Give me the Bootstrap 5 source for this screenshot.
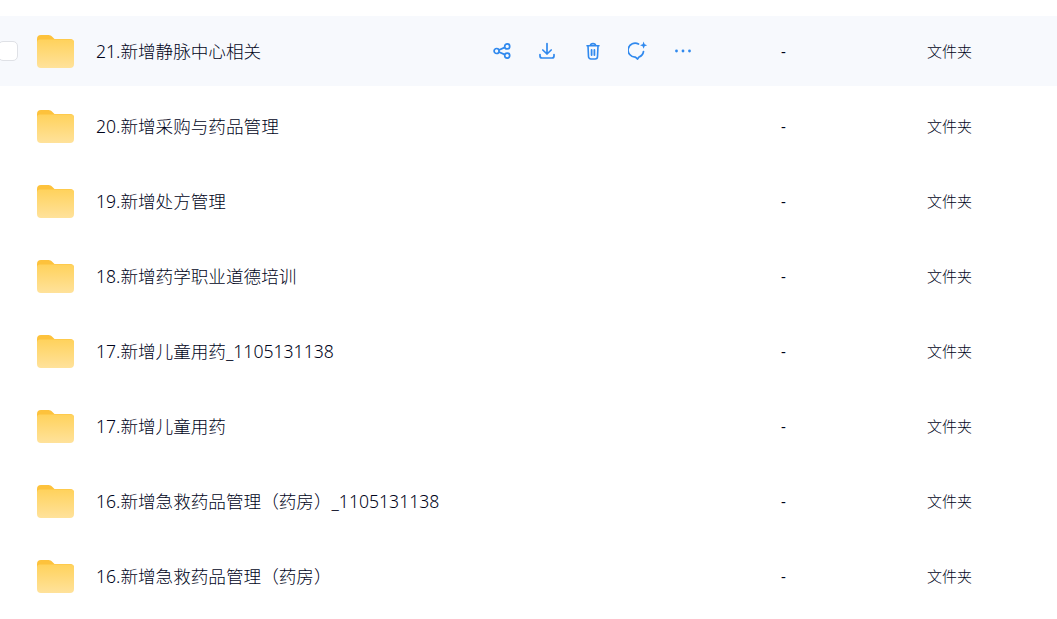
<!DOCTYPE html>
<html lang="zh">
<head>
  <meta charset="UTF-8">
  <meta name="viewport" content="width=device-width, initial-scale=1.0">
  <title>文件列表</title>
  <link href="https://cdn.jsdelivr.net/npm/bootstrap@5.3.0/dist/css/bootstrap.min.css" rel="stylesheet">
  <style>
    body {
      background-color: #fff;
      color: #00041a;
      font-family: "Noto Sans", "Noto Sans CJK SC", sans-serif;
      overflow: hidden;
    }
    .file-list {
      padding-top: 16px;
    }
    .file-row {
      height: 70px;
      margin-bottom: 5px;
    }
    .file-row.active-row {
      background-color: #f7f9fd;
    }
    .check-cell {
      width: 37px;
      flex: none;
    }
    .check-box {
      display: block;
      width: 20px;
      height: 20px;
      margin-left: -2px;
      background: #fff;
      border: 1px solid #dfe1e6;
      border-radius: 5px;
    }
    .folder-icon {
      width: 37px;
      height: 33px;
      flex: none;
    }
    .file-name {
      width: 396px;
      flex: none;
      margin-left: 22px;
      font-size: 17.6px;
      font-weight: 300;
      white-space: nowrap;
    }
    .action-cell {
      width: 289px;
      flex: none;
      gap: 25.3px;
      color: #3089ee;
    }
    .action-cell svg {
      width: 20px;
      height: 20px;
      flex: none;
    }
    .size-cell {
      width: 146px;
      flex: none;
      font-size: 15px;
    }
    .type-cell {
      font-size: 15px;
      font-weight: 300;
    }
  </style>
</head>
<body>
  <svg width="0" height="0" class="d-block">
    <defs>
      <linearGradient id="folderFill" x1="0" y1="0" x2="0" y2="1">
        <stop offset="0" stop-color="#ffd25c"/>
        <stop offset="1" stop-color="#ffe29b"/>
      </linearGradient>
      <symbol id="folder" viewBox="0 0 37 33">
        <path d="M0 4a4 4 0 0 1 4-4h7.5c1.6 0 2.7.7 3.7 1.8L17.5 4H33a4 4 0 0 1 4 4v3H0z" fill="#fdc23c"/>
        <path d="M0 7.5a3 3 0 0 1 3-3h31a3 3 0 0 1 3 3V29a4 4 0 0 1-4 4H4a4 4 0 0 1-4-4z" fill="url(#folderFill)"/>
      </symbol>
    </defs>
  </svg>

  <div class="file-list" id="fileList"></div>

  <script src="https://cdn.jsdelivr.net/npm/bootstrap@5.3.0/dist/js/bootstrap.bundle.min.js"></script>
  <script>
    const files = [
      '21.新增静脉中心相关',
      '20.新增采购与药品管理',
      '19.新增处方管理',
      '18.新增药学职业道德培训',
      '17.新增儿童用药_1105131138',
      '17.新增儿童用药',
      '16.新增急救药品管理（药房）_1105131138',
      '16.新增急救药品管理（药房）'
    ];

    const actions = `
      <svg viewBox="0 0 20 20" fill="none" stroke="currentColor" stroke-width="1.7"><circle cx="4.6" cy="10" r="2.5"/><circle cx="15.2" cy="5.4" r="2.5"/><circle cx="15.2" cy="14.6" r="2.5"/><path d="M6.9 9l6-2.6M6.9 11l6 2.6"/></svg>
      <svg viewBox="0 0 20 20" fill="none" stroke="currentColor" stroke-width="1.7" stroke-linecap="round" stroke-linejoin="round"><path d="M10 2.5v10.5M5.8 9L10 13l4.2-4"/><path d="M3 13.5v1.5a2 2 0 0 0 2 2h10a2 2 0 0 0 2-2v-1.5"/></svg>
      <svg viewBox="0 0 20 20" fill="none" stroke="currentColor" stroke-width="1.6" stroke-linecap="round" stroke-linejoin="round"><path d="M4 4.8h12M7.4 4.6c.2-2.6 5-2.6 5.2 0M5 5l.5 10.6A2.4 2.4 0 0 0 7.9 18h4.2a2.4 2.4 0 0 0 2.4-2.4L15 5"/><path d="M8.6 9v5M11.4 9v5" stroke-width="1.8"/></svg>
      <svg viewBox="0 0 20 20" fill="none" stroke="currentColor" stroke-width="1.7" stroke-linecap="round" stroke-linejoin="round"><path d="M10.5 3A7 7 0 1 0 7.4 16.1L9.6 18l1.4-2a7 7 0 0 0 4.5-5.5"/><path d="M15.6.6l1 2.6 2.6 1-2.6 1-1 2.6-1-2.6-2.6-1 2.6-1z" fill="currentColor" stroke="none"/></svg>
      <svg viewBox="0 0 20 20" fill="currentColor"><circle cx="3.5" cy="10" r="1.4"/><circle cx="10" cy="10" r="1.4"/><circle cx="16.5" cy="10" r="1.4"/></svg>`;

    // 第一行是鼠标悬停状态，显示复选框和操作按钮
    document.getElementById('fileList').innerHTML = files.map((name, i) => `
      <div class="file-row d-flex align-items-center ${i === 0 ? 'active-row' : ''}">
        <div class="check-cell">${i === 0 ? '<span class="check-box"></span>' : ''}</div>
        <svg class="folder-icon"><use href="#folder"/></svg>
        <div class="file-name">${name}</div>
        <div class="action-cell d-flex align-items-center">${i === 0 ? actions : ''}</div>
        <div class="size-cell">-</div>
        <div class="type-cell">文件夹</div>
      </div>`).join('');
  </script>
</body>
</html>
